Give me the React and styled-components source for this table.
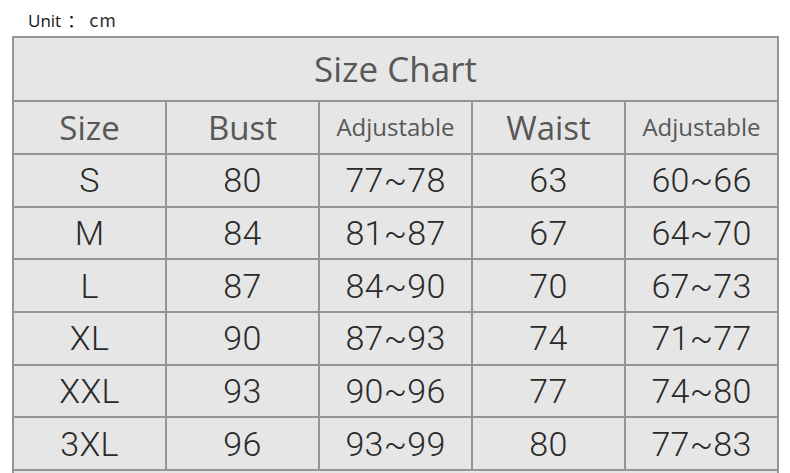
import React from "react";
import styled, { createGlobalStyle } from "styled-components";

const GlobalStyle = createGlobalStyle`
  html, body {
    margin: 0;
    padding: 0;
    background: #ffffff;
  }
`;

const Page = styled.div`
  width: 790px;
  height: 473px;
  overflow: hidden;
  background: #ffffff;
`;

const UnitLine = styled.div`
  height: 36px;
  padding-left: 28px;
  box-sizing: border-box;
  padding-top: 8px;
  font-family: "Open Sans", "Noto Sans CJK SC", sans-serif;
  font-size: 17px;
  line-height: 22px;
  color: #111;
  display: flex;
  align-items: baseline;
`;

const Colon = styled.span`
  font-family: "Noto Sans CJK SC", sans-serif;
  margin-left: 6px;
  width: 22px;
`;

const UnitValue = styled.span`
  font-family: "Noto Sans CJK SC", sans-serif;
  color: #333;
  font-size: 18px;
  letter-spacing: 1px;
`;

const Chart = styled.div`
  margin-left: 12px;
  width: 767px;
  display: grid;
  grid-template-columns: repeat(5, 151px);
  grid-template-rows: 62px 51px repeat(6, 50.67px) 40px;
  gap: 2px;
  padding: 2px;
  box-sizing: border-box;
  background: #959595;
`;

const Cell = styled.div`
  background: #e6e6e6;
  display: flex;
  align-items: center;
  justify-content: center;
  white-space: nowrap;
  grid-column: ${(p) => (p.$span ? `span ${p.$span}` : "auto")};
`;

const Title = styled(Cell)`
  font-family: "Open Sans", sans-serif;
  font-size: 35px;
  color: #575757;
  padding-bottom: 2px;
`;

const Head = styled(Cell)`
  font-family: "Open Sans", sans-serif;
  font-size: ${(p) => (p.$small ? "24px" : "33px")};
  color: #575757;
  padding-bottom: ${(p) => (p.$small ? "2px" : "1px")};
`;

const Data = styled(Cell)`
  font-family: Roboto, "Liberation Sans", sans-serif;
  font-weight: 300;
  font-size: 34px;
  color: #2a2a2a;
  letter-spacing: 0.3px;
`;

const headers = [
  { label: "Size" },
  { label: "Bust" },
  { label: "Adjustable", small: true },
  { label: "Waist" },
  { label: "Adjustable", small: true },
];

const rows = [
  ["S", "80", "77~78", "63", "60~66"],
  ["M", "84", "81~87", "67", "64~70"],
  ["L", "87", "84~90", "70", "67~73"],
  ["XL", "90", "87~93", "74", "71~77"],
  ["XXL", "93", "90~96", "77", "74~80"],
  ["3XL", "96", "93~99", "80", "77~83"],
];

export default function App() {
  return (
    <Page>
      <GlobalStyle />
      <UnitLine>
        Unit<Colon>：</Colon>
        <UnitValue>cm</UnitValue>
      </UnitLine>
      <Chart>
        <Title $span={5}>Size Chart</Title>
        {headers.map((h, i) => (
          <Head key={i} $small={h.small}>
            {h.label}
          </Head>
        ))}
        {rows.map((row) =>
          row.map((value, i) => <Data key={row[0] + i}>{value}</Data>)
        )}
        <Cell $span={5} />
      </Chart>
    </Page>
  );
}
